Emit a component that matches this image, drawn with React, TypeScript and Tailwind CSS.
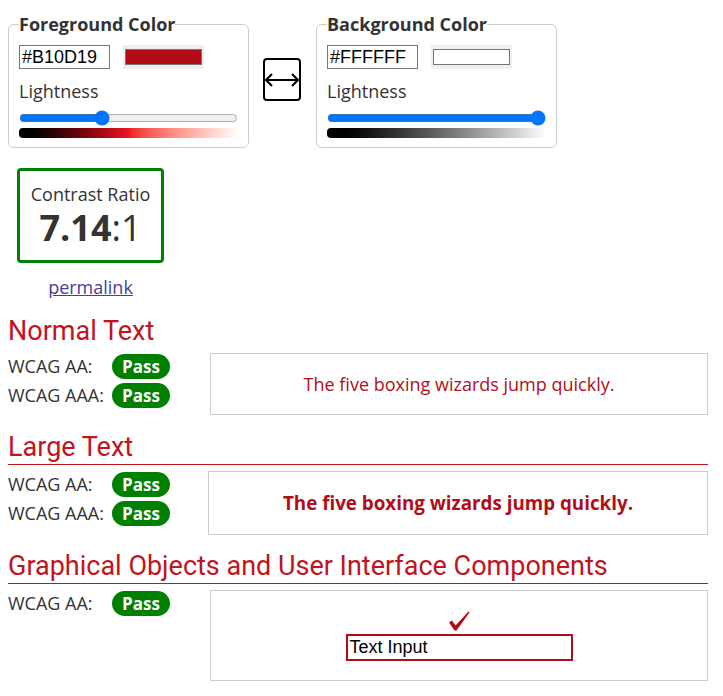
import React from "react";

const FG = "#B10D19";

function ColorPanel({
  title,
  hex,
  swatch,
  lightness,
  gradient,
}: {
  title: string;
  hex: string;
  swatch: string;
  lightness: number;
  gradient: string;
}) {
  return (
    <fieldset className="border border-[#cccccc] rounded-[6px] px-[10px] pt-[8px] pb-[9px]">
      <legend className="font-bold text-[18px] leading-[25px] text-[#333]">{title}</legend>
      <div className="flex items-center gap-[13px]">
        <input
          type="text"
          defaultValue={hex}
          className="w-[91px] h-[24px] border border-[#767676] px-[2px] text-[18px] text-black font-['Liberation_Sans',Arial,sans-serif] outline-none"
        />
        <div className="w-[81px] h-[24px] bg-[#efefef] flex items-center justify-center">
          <div className="w-[77px] h-[16px] border border-[#767676]" style={{ background: swatch }} />
        </div>
      </div>
      <div className="mt-[10px] text-[18px] leading-[24px]">Lightness</div>
      <input type="range" min={0} max={100} defaultValue={lightness} className="block w-[219px] h-[16px] mt-[7px]" />
      <div className={`w-[219px] h-[10px] mt-[2px] rounded-l-[4px] ${gradient}`} />
    </fieldset>
  );
}

function Pass() {
  return (
    <span className="inline-flex items-center justify-center w-[58px] h-[25px] rounded-full bg-[#008000] text-white font-bold text-[17px]">
      Pass
    </span>
  );
}

function Row({ label }: { label: string }) {
  return (
    <div className="flex items-center h-[25px] mb-[4px]">
      <span className="w-[104px]">{label}</span>
      <Pass />
    </div>
  );
}

export default function App() {
  return (
    <div className="px-2 pt-[12px] pb-4 w-[716px] text-[#333] text-[18px] font-['Open_Sans',sans-serif]">
      <div className="flex items-start">
        <ColorPanel
          title="Foreground Color"
          hex="#B10D19"
          swatch={FG}
          lightness={37}
          gradient="bg-linear-to-r from-black via-[#ee1422] to-white"
        />
        <button className="mt-[46px] ml-[14px] mr-[15px] w-[38px] h-[43px] shrink-0 border-2 border-black rounded-[4px] flex items-center justify-center">
          <svg width="34" height="14" viewBox="0 0 34 14" fill="none" stroke="black" strokeWidth="2">
            <path d="M1 7h32M7 1L1 7l6 6M27 1l6 6-6 6" />
          </svg>
        </button>
        <ColorPanel
          title="Background Color"
          hex="#FFFFFF"
          swatch="#ffffff"
          lightness={100}
          gradient="bg-linear-to-r from-black to-white"
        />
      </div>

      <div className="ml-[9px] mt-[20px] w-[147px] h-[95px] border-[3px] border-[#008000] rounded-[4px] flex flex-col items-center justify-center">
        <div className="text-[18px] leading-[24px]">Contrast Ratio</div>
        <div className="text-[36px] leading-[44px]">
          <span className="font-bold">7.14</span>:1
        </div>
      </div>
      <div className="w-[165px] text-center mt-[11px]">
        <a href="#" className="underline text-[#4b3c9a]">permalink</a>
      </div>

      <h2 className="mt-[14px] text-[27px] leading-[32px] text-[#c0141e] font-['Roboto',sans-serif]">Normal Text</h2>
      <div className="flex mt-[6px]">
        <div className="w-[202px] pt-[1px]">
          <Row label="WCAG AA:" />
          <Row label="WCAG AAA:" />
        </div>
        <div className="flex-1 h-[62px] border border-[#cccccc] flex items-center justify-center text-[18px] text-[#B10D19]">
          The five boxing wizards jump quickly.
        </div>
      </div>

      <h2 className="mt-[16px] h-[34px] text-[27px] leading-[32px] text-[#c0141e] font-['Roboto',sans-serif] border-b border-[#c0141e]">
        Large Text
      </h2>
      <div className="flex mt-[6px]">
        <div className="w-[200px] pt-[1px]">
          <Row label="WCAG AA:" />
          <Row label="WCAG AAA:" />
        </div>
        <div className="flex-1 h-[64px] border border-[#cccccc] flex items-center justify-center text-[18.8px] font-bold text-[#B10D19]">
          The five boxing wizards jump quickly.
        </div>
      </div>

      <h2 className="mt-[15px] h-[34px] text-[27px] leading-[32px] text-[#c0141e] font-['Roboto',sans-serif] border-b border-[#c0141e]">
        Graphical Objects and User Interface Components
      </h2>
      <div className="flex mt-[6px]">
        <div className="w-[202px] pt-[1px]">
          <Row label="WCAG AA:" />
        </div>
        <div className="flex-1 h-[91px] border border-[#cccccc] flex flex-col items-center justify-center">
          <svg width="21" height="20" viewBox="0 0 21 20" className="mb-[3px] ml-[1px]">
            <path d="M0 11.5L3 9.5L6.5 14.5L19.5 0.5L20.5 1.5L7.5 19.5L5.5 19.5Z" fill="#B10D19" />
          </svg>
          <div className="w-[227px] h-[27px] border-2 border-[#B10D19] px-[2px] text-[18px] leading-[23px] text-black font-['Liberation_Sans',Arial,sans-serif]">
            Text Input
          </div>
        </div>
      </div>
    </div>
  );
}
